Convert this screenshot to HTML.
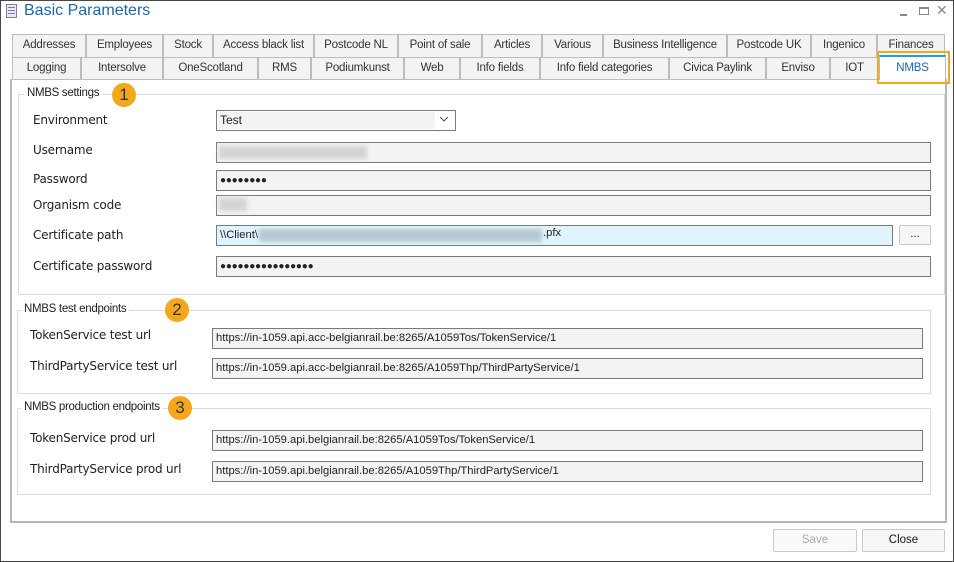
<!DOCTYPE html>
<html><head><style>
*{box-sizing:border-box;margin:0;padding:0}
body{width:954px;height:562px;background:#fff;font-family:"DejaVu Sans","Liberation Sans",sans-serif;font-size:11px;color:#222;position:relative;overflow:hidden}
.a{position:absolute}
.win{left:0;top:0;width:954px;height:562px;border:1px solid #474747}
.tab{position:absolute;height:23px;background:#f3f3f3;border:1px solid #bdbdbd;border-bottom:none;text-align:center;line-height:21px;font-family:"Liberation Sans",sans-serif;font-size:11.5px;letter-spacing:-0.2px;color:#333;white-space:nowrap}
.panel{left:10px;top:79px;width:937px;height:444px;border:2px solid #b6b6b6;border-top:1px solid #bdbdbd}
.grp{position:absolute;border:1px solid #dcdcdc}
.gl{position:absolute;background:#fff;padding:0 3px;font-family:"Liberation Sans",sans-serif;font-size:11.5px;letter-spacing:-0.3px;color:#222}
.num{position:absolute;width:24px;height:24px;border-radius:50%;background:#f5a71c;color:#333;font-size:17px;text-align:center;line-height:24px;font-family:"Liberation Sans",sans-serif}
.lbl{position:absolute;font-size:12px;color:#222;letter-spacing:-0.2px}
.inp{position:absolute;height:21px;background:#f3f3f3;border:1px solid #7a7a7a;font-family:"Liberation Sans",sans-serif;font-size:11.2px;line-height:19px;padding-left:3px;white-space:nowrap;overflow:hidden}
.dots{font-size:10px;letter-spacing:-0.2px}
.blur{position:absolute;background:#d4d4d4;filter:blur(2px)}
.btn{position:absolute;height:23px;border:1px solid #c8c8c8;border-radius:2px;background:#f7f7f7;text-align:center;line-height:21px;font-family:"Liberation Sans",sans-serif;font-size:11.5px}
</style></head><body>
<div class="a win"></div>
<div class="a" style="left:6px;top:4px;width:11px;height:14px;border:1px solid #7c7ca8;background:#e8e8f4"></div>
<div class="a" style="left:8px;top:7px;width:7px;height:1px;background:#7c7ca8;box-shadow:0 3px #7c7ca8,0 6px #7c7ca8"></div>
<div class="a" style="left:24px;top:2px;font-size:16px;color:#1c66b0;font-family:'Liberation Sans',sans-serif">Basic Parameters</div>
<div class="a" style="left:900px;top:14px;width:7px;height:2px;background:#888"></div>
<div class="a" style="left:919px;top:7px;width:10px;height:8px;border:1px solid #888;border-top-width:2px"></div>
<div class="a" style="left:936px;top:3px;font-size:14px;color:#888">✕</div>

<div class="tab" style="left:12px;top:34px;width:74px">Addresses</div>
<div class="tab" style="left:86px;top:34px;width:77px">Employees</div>
<div class="tab" style="left:163px;top:34px;width:50px">Stock</div>
<div class="tab" style="left:213px;top:34px;width:101px">Access black list</div>
<div class="tab" style="left:314px;top:34px;width:84px">Postcode NL</div>
<div class="tab" style="left:398px;top:34px;width:84px">Point of sale</div>
<div class="tab" style="left:482px;top:34px;width:60px">Articles</div>
<div class="tab" style="left:542px;top:34px;width:61px">Various</div>
<div class="tab" style="left:603px;top:34px;width:124px">Business Intelligence</div>
<div class="tab" style="left:727px;top:34px;width:84px">Postcode UK</div>
<div class="tab" style="left:811px;top:34px;width:66px">Ingenico</div>
<div class="tab" style="left:877px;top:34px;width:68px">Finances</div>

<div class="tab" style="left:12px;top:57px;width:69px">Logging</div>
<div class="tab" style="left:81px;top:57px;width:82px">Intersolve</div>
<div class="tab" style="left:163px;top:57px;width:95px">OneScotland</div>
<div class="tab" style="left:258px;top:57px;width:53px">RMS</div>
<div class="tab" style="left:311px;top:57px;width:93px">Podiumkunst</div>
<div class="tab" style="left:404px;top:57px;width:56px">Web</div>
<div class="tab" style="left:460px;top:57px;width:80px">Info fields</div>
<div class="tab" style="left:540px;top:57px;width:129px">Info field categories</div>
<div class="tab" style="left:669px;top:57px;width:97px">Civica Paylink</div>
<div class="tab" style="left:766px;top:57px;width:64px">Enviso</div>
<div class="tab" style="left:830px;top:57px;width:49px">IOT</div>

<div class="a panel"></div>
<div class="tab" style="left:879px;top:55px;width:67px;height:25px;background:#fff;border-top:2px solid #1ba1e2;color:#1c66b0;line-height:22px">NMBS</div>
<div class="a" style="left:877px;top:51px;width:73px;height:33px;border:2px solid #f5a71c"></div>

<!-- group 1 -->
<div class="grp" style="left:18px;top:94px;width:927px;height:201px"></div>
<div class="gl" style="left:24px;top:87px">NMBS settings</div>
<div class="num" style="left:112px;top:83px">1</div>
<div class="lbl" style="left:33px;top:113px">Environment</div>
<div class="inp" style="left:216px;top:110px;width:240px;background:#fff"></div>
<div class="a" style="left:218px;top:112px;width:217px;height:17px;background:#f3f3f3"></div>
<div class="a" style="left:220px;top:112px;font-family:'Liberation Sans',sans-serif;font-size:12px;line-height:17px">Test</div>
<svg class="a" style="left:439px;top:116px" width="10" height="6"><path d="M1 1l4 4 4-4" fill="none" stroke="#555" stroke-width="1"/></svg>
<div class="lbl" style="left:33px;top:143px">Username</div>
<div class="inp" style="left:216px;top:142px;width:715px"></div>
<div class="blur" style="left:219px;top:146px;width:148px;height:13px"></div>
<div class="lbl" style="left:33px;top:172px">Password</div>
<div class="inp dots" style="left:216px;top:170px;width:715px">●●●●●●●●</div>
<div class="lbl" style="left:33px;top:198px">Organism code</div>
<div class="inp" style="left:216px;top:195px;width:715px"></div>
<div class="blur" style="left:219px;top:198px;width:28px;height:13px"></div>
<div class="lbl" style="left:33px;top:228px">Certificate path</div>
<div class="inp" style="left:216px;top:225px;width:677px;background:#dff4fe">\\Client\</div>
<div class="blur" style="left:259px;top:229px;width:283px;height:13px;background:#b8c8d0"></div>
<div class="a" style="left:543px;top:227px;font-family:'Liberation Sans',sans-serif;font-size:11.2px">.pfx</div>
<div class="btn" style="left:899px;top:225px;width:32px;height:20px;line-height:16px">...</div>
<div class="lbl" style="left:33px;top:259px">Certificate password</div>
<div class="inp dots" style="left:216px;top:256px;width:715px">●●●●●●●●●●●●●●●●</div>

<!-- group 2 -->
<div class="grp" style="left:17px;top:310px;width:914px;height:84px"></div>
<div class="gl" style="left:21px;top:303px">NMBS test endpoints</div>
<div class="num" style="left:165px;top:298px">2</div>
<div class="lbl" style="left:30px;top:328px">TokenService test url</div>
<div class="inp" style="left:212px;top:328px;width:711px">https://in-1059.api.acc-belgianrail.be:8265/A1059Tos/TokenService/1</div>
<div class="lbl" style="left:30px;top:359px">ThirdPartyService test url</div>
<div class="inp" style="left:212px;top:358px;width:711px">https://in-1059.api.acc-belgianrail.be:8265/A1059Thp/ThirdPartyService/1</div>

<!-- group 3 -->
<div class="grp" style="left:17px;top:408px;width:914px;height:87px"></div>
<div class="gl" style="left:21px;top:401px">NMBS production endpoints</div>
<div class="num" style="left:168px;top:396px">3</div>
<div class="lbl" style="left:30px;top:431px">TokenService prod url</div>
<div class="inp" style="left:212px;top:430px;width:711px">https://in-1059.api.belgianrail.be:8265/A1059Tos/TokenService/1</div>
<div class="lbl" style="left:30px;top:462px">ThirdPartyService prod url</div>
<div class="inp" style="left:212px;top:461px;width:711px">https://in-1059.api.belgianrail.be:8265/A1059Thp/ThirdPartyService/1</div>

<div class="btn" style="left:773px;top:529px;width:84px;color:#aaa;background:#fafafa">Save</div>
<div class="btn" style="left:862px;top:529px;width:83px;color:#111">Close</div>
</body></html>
